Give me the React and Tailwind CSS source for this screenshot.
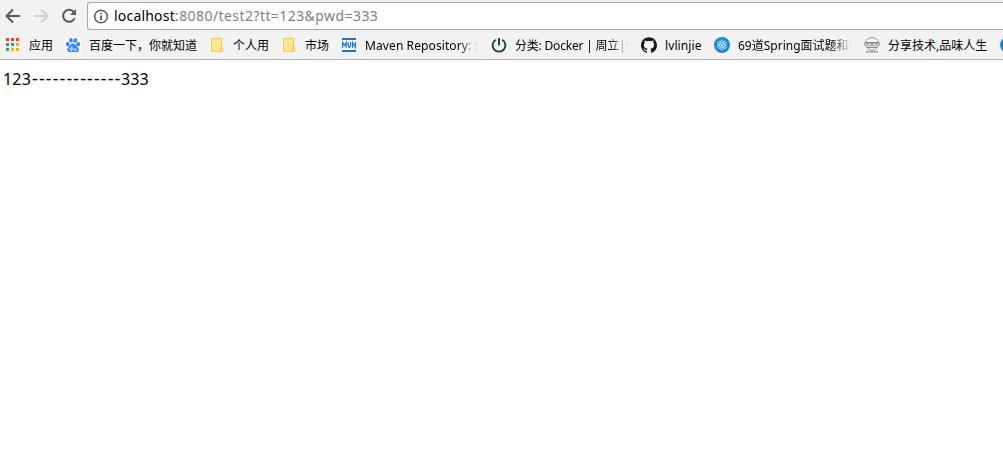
import React from "react";
import { SiGithub } from "react-icons/si";

const Apps = () => (
  <svg width="16" height="16" viewBox="0 0 16 16" shapeRendering="crispEdges">
    {["#ff3b30", "#ff3b30", "#ff3b30", "#34a05a", "#2196f3", "#fbb300", "#34a05a", "#fbb300", "#fbb300"].map((c, i) => (
      <rect key={i} x={1 + (i % 3) * 5} y={1 + Math.floor(i / 3) * 5} width="3" height="3" fill={c} />
    ))}
  </svg>
);

const Paw = () => (
  <svg width="16" height="16" viewBox="0 0 16 16">
    <rect width="16" height="16" fill="#fff" />
    <g fill="#3385ff">
      <ellipse cx="2.8" cy="7.2" rx="1.9" ry="2.3" transform="rotate(-15 2.8 7.2)" />
      <ellipse cx="6" cy="3.4" rx="1.8" ry="2.4" />
      <ellipse cx="10.2" cy="3.5" rx="1.8" ry="2.4" transform="rotate(12 10.2 3.5)" />
      <ellipse cx="13.2" cy="7.3" rx="1.9" ry="2.2" />
      <path d="M8 6.500c1.700 0 2.500 1.400 3.400 2.400 1.300 1.300 2.700 2.300 2.500 4.100-.2 1.800-1.700 2.400-3.100 2.200-1.800-.3-3.500-.3-5.200 0-1.700.3-3.300-.6-3.400-2.400-.1-1.700 1.200-2.700 2.500-3.900C5.700 7.800 6.400 6.500 8 6.500Z" />
    </g>
    <path d="M7 9.500v4H5.800a1.100 1.100 0 0 1 0-2.400H7M8.700 11v1.700q0 .8.800.8h1.400V11" fill="none" stroke="#fff" strokeWidth=".8" />
  </svg>
);

const Folder = () => (
  <svg width="16" height="16" viewBox="0 0 16 16">
    <path d="M2.500 1.500h10v13h-10z" fill="#ffe695" stroke="#efca50" />
    <path d="M11.500 14.500v-3q0-.9.500-.9h1.500v3q0 .9-1 .9z" fill="#ffe695" stroke="#e9c13e" />
  </svg>
);

const Mvn = () => (
  <svg width="16" height="16" viewBox="0 0 16 16" fill="none" stroke="#1976d2">
    <rect y="1" x="1" width="14" height="14" fill="#fff" stroke="none" />
    <path d="M1 2h14M1 14h14" strokeWidth="2" />
    <path d="M1.600 11V5.500L3.400 8.500 5.200 5.500V11M7 5v3.300L8.300 10.500 9.700 8.300V5M11.600 11V5.500L14.400 10.500V5" strokeWidth="1.200" />
  </svg>
);

const Power = () => (
  <svg width="16" height="16" viewBox="0 0 16 16" fill="none" stroke="#15413f" strokeWidth="1.900">
    <path d="M8 1v7.500M4.800 2.700a6.400 6.400 0 1 0 6.400 0" />
  </svg>
);

const Atom = () => (
  <svg width="16" height="16" viewBox="0 0 16 16" fill="none">
    <circle cx="8" cy="8" r="8" fill="#1989dc" />
    <g stroke="#c9e8ff" strokeWidth=".8">
      <ellipse cx="8" cy="8" rx="2.200" ry="5" />
      <ellipse cx="8" cy="8" rx="2.200" ry="5" transform="rotate(60 8 8)" />
      <ellipse cx="8" cy="8" rx="2.200" ry="5" transform="rotate(120 8 8)" />
    </g>
    <circle cx="8" cy="8" r="1" fill="#fff" />
  </svg>
);

const Face = () => (
  <svg width="16" height="16" viewBox="0 0 16 16" fill="none" stroke="#8c8c8c">
    <rect width="16" height="16" fill="#f8f8f8" stroke="none" />
    <path d="M1.500 5.500C2 2.200 4.500.7 8 .7s6 1.500 6.500 4.800M3 10.500c1 1.800 2.700 2.700 5 2.700s4-.9 5-2.700" />
    <path d="M.8 5.500h14.400v2.700l-2 2.300H2.800l-2-2.300z" fill="#dedede" />
    <path d="M2.500 6.800c2-.9 4-.9 5.500 0 1.500-.9 3.500-.9 5.500 0-1 1.800-3.500 2-5.500.7-2 1.300-4.500 1.100-5.500-.7z" fill="#fff" />
    <path d="M2 14.800h12" strokeWidth="1.500" strokeDasharray="2 .6" />
  </svg>
);

const Github = () => <SiGithub size={16} color="#191717" />;

const bookmarks = [
  { Icon: Apps, label: "应用", width: "w-6" },
  { Icon: Paw, label: "百度一下，你就知道", width: "w-[108px]" },
  { Icon: Folder, label: "个人用", width: "w-9" },
  { Icon: Folder, label: "市场", width: "w-6" },
  { Icon: Mvn, label: "Maven Repository: S", width: "w-[114px]", fade: true, spacing: "tracking-[0.1px]" },
  { Icon: Power, label: "分类: Docker | 周立|S", width: "w-[114px]", fade: true, spacing: "tracking-[-0.2px]" },
  { Icon: Github, label: "lvlinjie", width: "w-[37px]", spacing: "tracking-[0.1px]" },
  { Icon: Atom, label: "69道Spring面试题和答", width: "w-[114px]", fade: true },
  { Icon: Face, label: "分享技术,品味人生", width: "w-[100px]" },
  { Icon: Atom, label: "", width: "w-4" },
];

const Bookmark = ({ Icon, label, width, fade, spacing = "" }) => (
  <div className="flex shrink-0 items-center gap-2">
    <span className="shrink-0"><Icon /></span>
    <span
      className={`${width} ${spacing} overflow-hidden pt-0.5 whitespace-nowrap ${
        fade ? "[mask-image:linear-gradient(to_right,black_82%,transparent)]" : ""
      }`}
    >
      {label}
    </span>
  </div>
);

export default function App() {
  return (
    <div className="h-[450px] w-[1003px] overflow-hidden bg-white font-['Noto_Sans','Noto_Sans_CJK_SC',sans-serif] text-black">
      <header className="h-[60px] border-b border-[#b6b4b6] bg-[#f2f2f2]">
        <div className="flex h-[30px] items-end">
          <nav className="flex h-7 w-[87px] shrink-0 items-center gap-3 pl-[5px]">
            <svg width="16" height="16" viewBox="0 0 16 16" fill="none" stroke="#5a5a5a" strokeWidth="2">
              <path d="M15 8H2M8 1.500 1.500 8 8 14.500" />
            </svg>
            <svg width="16" height="16" viewBox="0 0 16 16" fill="none" stroke="#d0d0d0" strokeWidth="2">
              <path d="M1 8h13M8 1.500 14.500 8 8 14.500" />
            </svg>
            <svg width="16" height="16" viewBox="0 0 16 16" fill="none">
              <path d="M12.800 4A6 6 0 1 0 13.700 10" stroke="#5a5a5a" strokeWidth="2" />
              <path d="M15 1v6H9z" fill="#5a5a5a" />
            </svg>
          </nav>
          <div className="flex h-7 flex-1 items-center gap-[5px] rounded-l-[3px] border border-r-0 border-[#a9a9a9] bg-white pl-[6px]">
            <svg width="15" height="15" viewBox="0 0 15 15" fill="none" stroke="#5a5a5a" strokeWidth="1.500">
              <circle cx="7" cy="7.500" r="6.300" />
              <path d="M7 6.500V11M7 3.700v1.600" strokeWidth="1.800" />
            </svg>
            <span className="text-sm leading-5 tracking-[0.43px] whitespace-nowrap text-[#808080]">
              <span className="tracking-[0.2px] text-black">localhost</span>:8080/test2?tt=123&amp;pwd=333
            </span>
          </div>
        </div>
        <div className="flex h-[29px] items-center gap-3 overflow-hidden pt-px pl-[5px] text-xs leading-[18px]">
          {bookmarks.map((b, i) => (
            <Bookmark key={i} {...b} />
          ))}
        </div>
      </header>
      <main className="flex items-baseline px-[3px] pt-[7px] text-base leading-[22px] whitespace-nowrap">
        <span className="w-[29px] tracking-[0.2px]">123</span>
        <span className="w-[90px] text-[18px] tracking-[1.08px]">-------------</span>
        <span className="-ml-px tracking-[0.1px]">333</span>
      </main>
    </div>
  );
}
